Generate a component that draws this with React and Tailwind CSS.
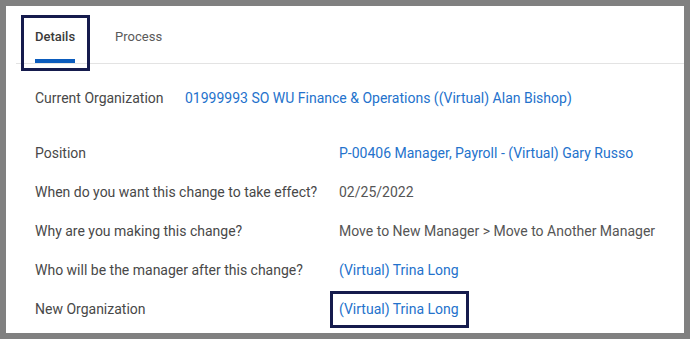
import React from 'react'

const rows = [
  ['Position', 'P-00406 Manager, Payroll - (Virtual) Gary Russo', true],
  ['When do you want this change to take effect?', '02/25/2022', false],
  ['Why are you making this change?', 'Move to New Manager > Move to Another Manager', false],
  ['Who will be the manager after this change?', '(Virtual) Trina Long', true],
]

function Row({ label, value, link, boxed }) {
  return (
    <div className="flex h-[39px] items-center">
      <div className="w-[304px] shrink-0 text-[#484848]">{label}</div>
      <div className={`relative ${link ? 'text-[#2472cc]' : 'text-[#555]'}`}>
        {value}
        {boxed && <div className="absolute -left-[9px] -right-[10px] -top-[8px] -bottom-[8px] border-[3px] border-[#151b4d]" />}
      </div>
    </div>
  )
}

export default function App() {
  return (
    <div className="relative h-[339px] w-[690px] border-[6px] border-[#808080] bg-white font-['Roboto',sans-serif] text-[14px]">
      <div className="ml-[10px] flex h-[58px] border-b border-[#e3e3e3] pl-[19px]">
        <div className="flex flex-col justify-end">
          <span className="text-[13px] font-medium text-[#3a3a3a]">Details</span>
          <div className="mt-[13px] h-[4px] bg-[#0b5cbd]" />
        </div>
        <div className="ml-[40px] flex flex-col justify-end">
          <span className="text-[13px] text-[#5a5a5a]">Process</span>
          <div className="mt-[13px] h-[4px]" />
        </div>
      </div>
      <div className="absolute left-[15px] top-[9px] h-[56px] w-[69px] border-[3px] border-[#151b4d]" />

      <div className="pl-[29px]">
        <div className="mt-[15px] flex h-[39px] items-center">
          <div className="w-[150px] shrink-0 text-[#484848]">Current Organization</div>
          <div className="text-[#2472cc]">01999993 SO WU Finance &amp; Operations ((Virtual) Alan Bishop)</div>
        </div>
        <div className="mt-[16px]">
          {rows.map(([l, v, link]) => <Row key={l} label={l} value={v} link={link} />)}
          <Row label="New Organization" value="(Virtual) Trina Long" link boxed />
        </div>
      </div>
    </div>
  )
}
